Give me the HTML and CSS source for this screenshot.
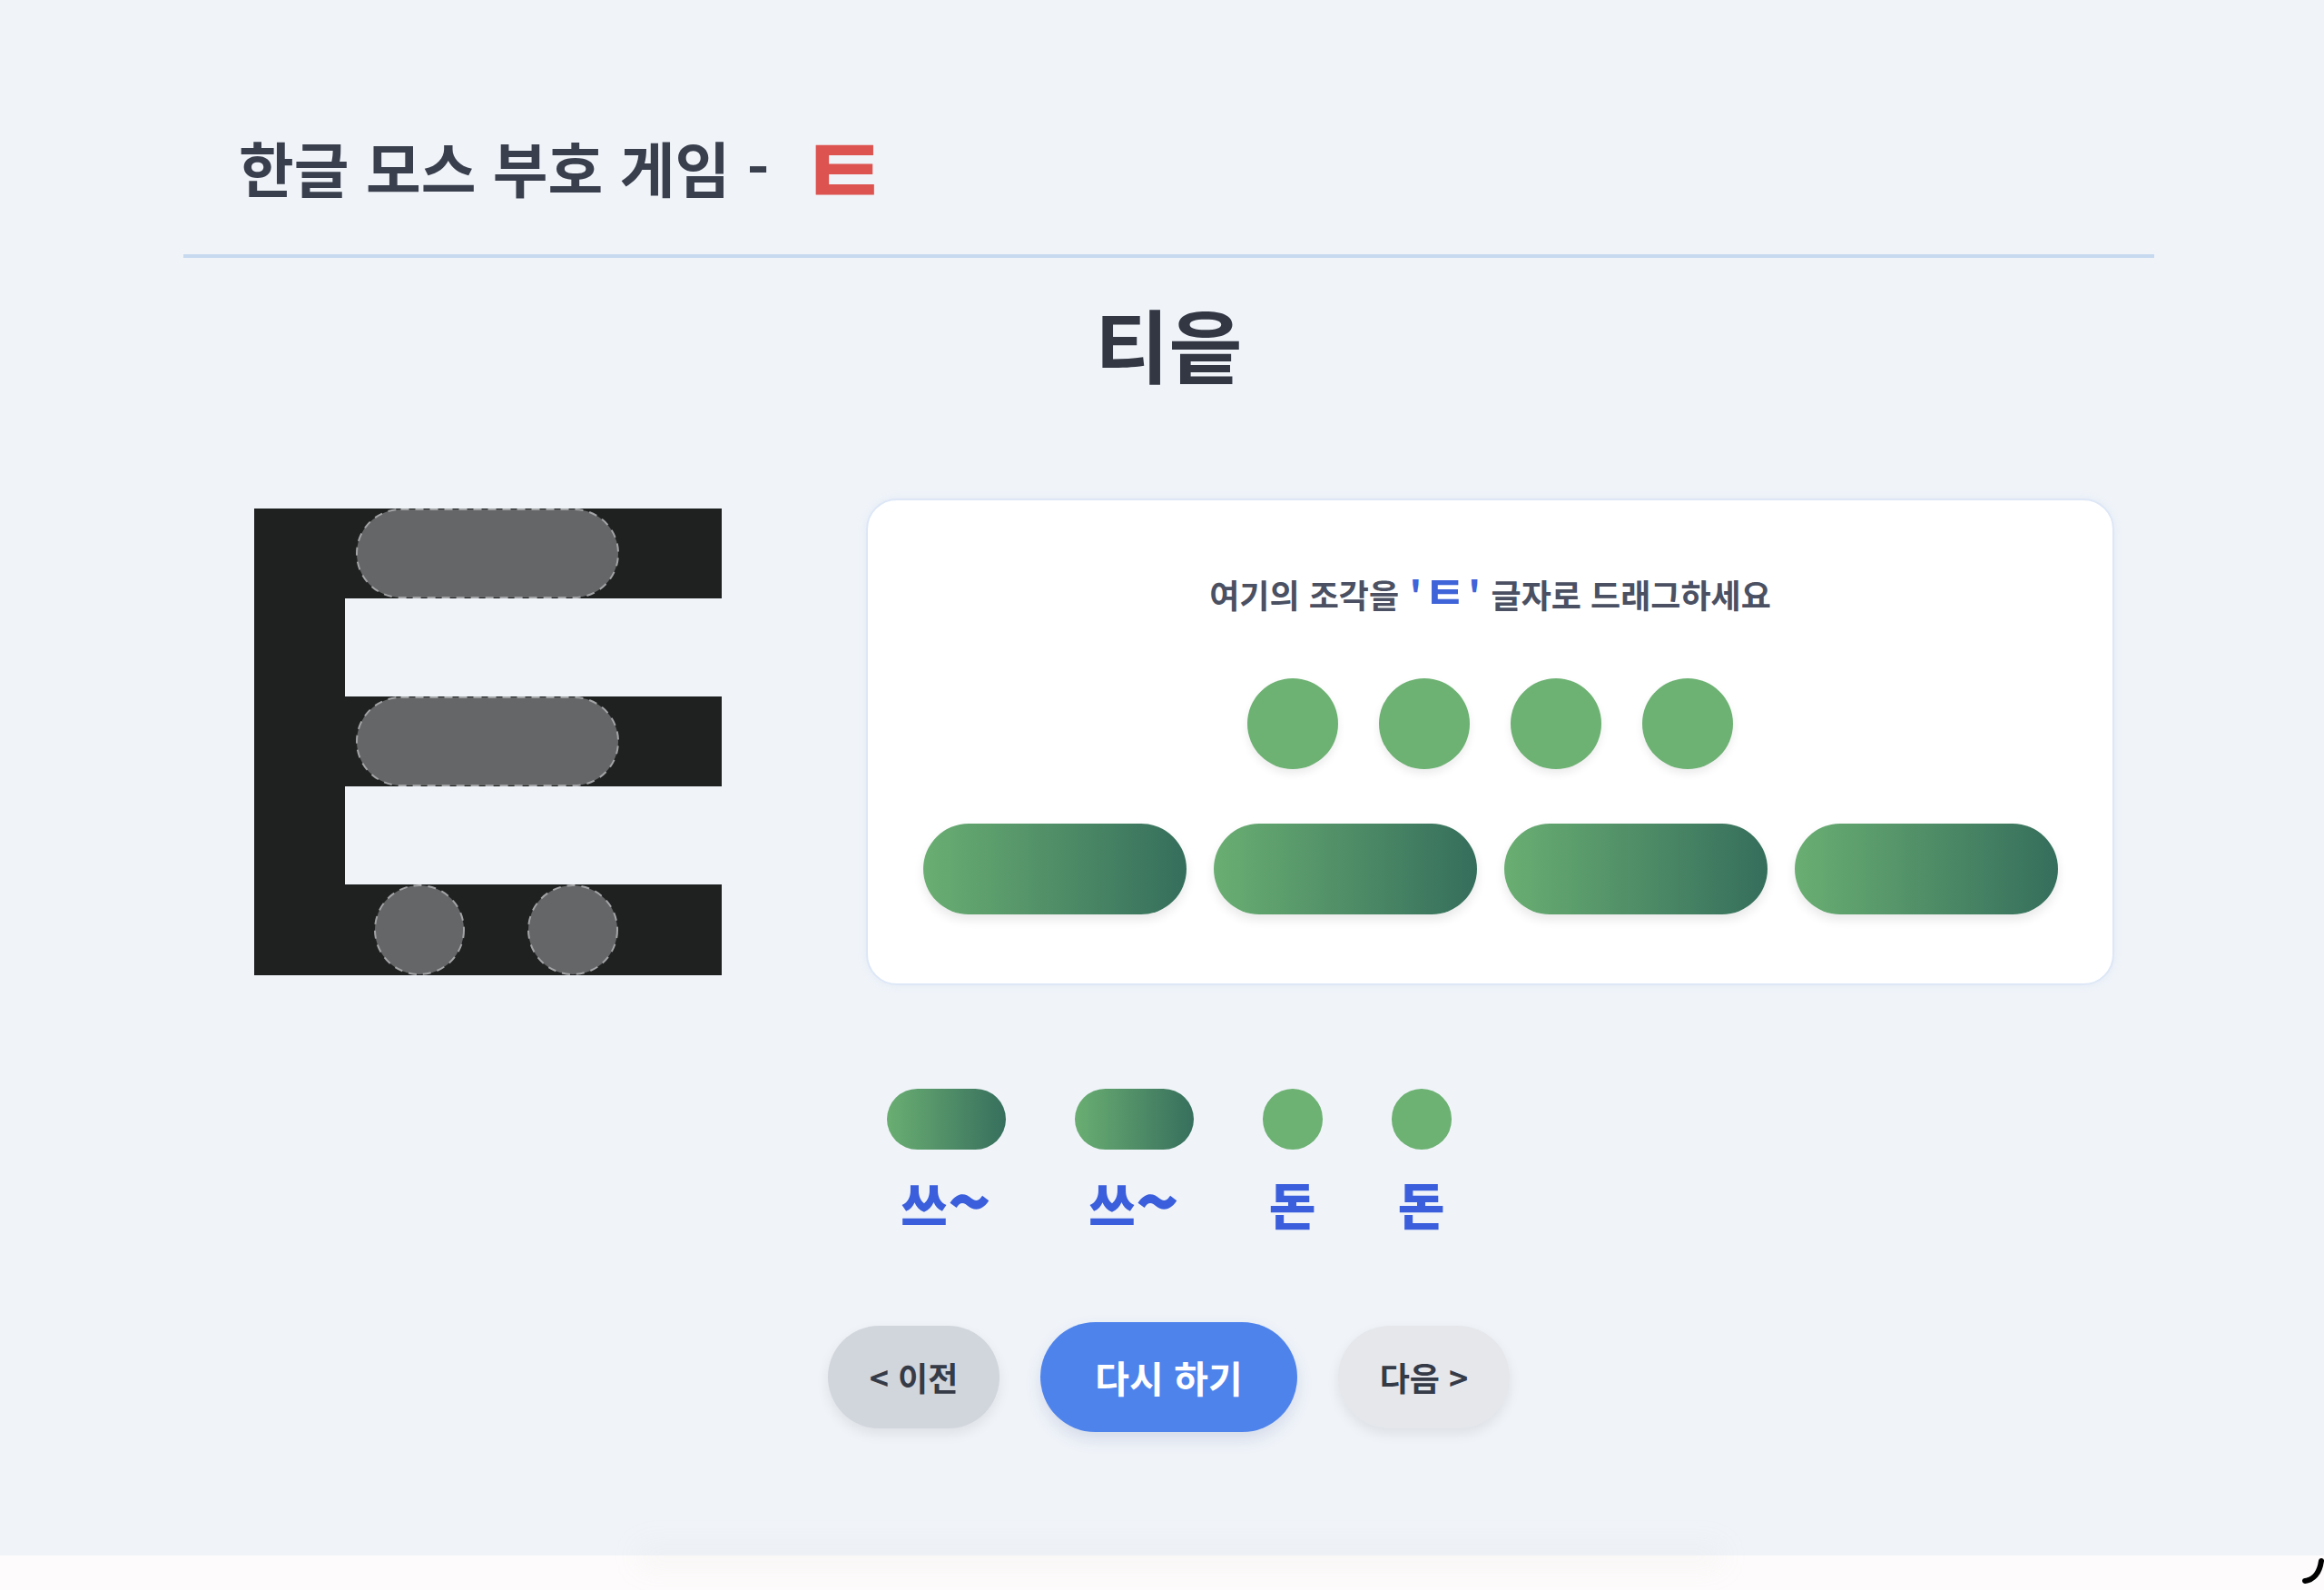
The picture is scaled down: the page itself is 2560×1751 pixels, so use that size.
FILE: index.html
```html
<!DOCTYPE html>
<html lang="ko">
<head>
<meta charset="utf-8">
<title>한글 모스 부호 게임</title>
<link rel="stylesheet" href="styles.css">
</head>
<body>
<div class="screen">
  <div class="page">
    <header class="top">
      <h1 class="title">한글 모스 부호 게임 - <span class="title-letter">ㅌ</span></h1>
    </header>

    <h2 class="name">티읕</h2>

    <section class="board">
      <!-- target letter with the drop slots laid over its strokes -->
      <svg class="glyph" width="515" height="514" viewBox="0 0 515 514">
        <g fill="#1f2121">
          <rect x="0" y="0" width="515" height="99"/>
          <rect x="0" y="0" width="100" height="514"/>
          <rect x="0" y="207" width="515" height="99"/>
          <rect x="0" y="414" width="515" height="100"/>
        </g>
        <g fill="#656667" stroke="#a3a4a6" stroke-width="2" stroke-dasharray="9 7">
          <rect x="113" y="1" width="288" height="97" rx="48.5"/>
          <rect x="113" y="208" width="288" height="97" rx="48.5"/>
          <circle cx="182" cy="464" r="49"/>
          <circle cx="351" cy="464" r="49"/>
        </g>
      </svg>

      <div class="tray">
        <p class="hint">여기의 조각을 <span class="hl">'<span class="hl-letter">ㅌ</span>'</span> 글자로 드래그하세요</p>
        <div class="dots">
          <span class="dot"></span>
          <span class="dot"></span>
          <span class="dot"></span>
          <span class="dot"></span>
        </div>
        <div class="dashes">
          <span class="dash"></span>
          <span class="dash"></span>
          <span class="dash"></span>
          <span class="dash"></span>
        </div>
      </div>
    </section>

    <div class="code">
      <div class="sym"><span class="mark mark-long"></span><span class="sound">쓰<span class="tilde">~</span></span></div>
      <div class="sym"><span class="mark mark-long"></span><span class="sound">쓰<span class="tilde">~</span></span></div>
      <div class="sym"><span class="mark mark-short"></span><span class="sound">돈</span></div>
      <div class="sym"><span class="mark mark-short"></span><span class="sound">돈</span></div>
    </div>

    <div class="actions">
      <button class="btn btn-prev" type="button">&lt; 이전</button>
      <button class="btn btn-retry" type="button">다시 하기</button>
      <button class="btn btn-next" type="button">다음 &gt;</button>
    </div>
  </div>
</div>
<div class="tail">
  <span class="tail-glow"></span>
  <svg class="tail-mark" width="24" height="30" viewBox="0 0 24 30">
    <path d="M3 26 C12 25 19 18 21 4" fill="none" stroke="#000" stroke-width="6" stroke-linecap="round"/>
  </svg>
</div>
</body>
</html>
```

FILE: styles.css
```css
* {
  box-sizing: border-box;
}

html,
body {
  margin: 0;
  padding: 0;
}

body {
  background: #fdfbfb;
  font-family: "Noto Sans CJK KR", "Noto Sans", sans-serif;
  color: #363b4a;
  overflow: hidden;
}

.screen {
  height: 1713px;
  background: #f0f4f9;
  overflow: hidden;
}

.page {
  width: 2171px;
  margin-left: 202px;
}

/* header */
.top {
  padding: 138px 0 52px 61px;
  border-bottom: 4px solid #c6d9ef;
}

.title {
  margin: 0;
  font-size: 66px;
  line-height: 90px;
  font-weight: 700;
  color: #3a3f4e;
}

.title-letter {
  display: inline-block;
  margin-left: 15px;
  font-size: 108px;
  line-height: 0;
  vertical-align: -16px;
  color: #dc5350;
  font-weight: 700;
}

.name {
  margin: 40px 0 0;
  text-align: center;
  font-size: 88px;
  line-height: 106px;
  font-weight: 700;
  color: #333744;
}

/* letter + piece tray */
.board {
  display: flex;
  align-items: center;
  gap: 159px;
  margin-top: 119px;
  padding-left: 78px;
}

.glyph {
  display: block;
  flex: none;
}

.tray {
  width: 1375px;
  padding: 76px 60px;
  background: #ffffff;
  border: 2px solid #dde7f6;
  border-radius: 34px;
  box-shadow: 0 0 10px rgba(170, 195, 235, 0.18);
}

.hint {
  margin: 0;
  text-align: center;
  font-size: 36px;
  line-height: 54px;
  font-weight: 600;
  color: #4b5162;
}

.hl {
  margin: 0 2px;
  color: #3f63d8;
  font-weight: 800;
}

.hl-letter {
  display: inline-block;
  margin: 0 3px;
  font-size: 50px;
  line-height: 0;
  vertical-align: -1px;
  font-weight: 700;
}

.dots {
  display: flex;
  justify-content: center;
  gap: 45px;
  margin-top: 66px;
}

.dot {
  width: 100px;
  height: 100px;
  border-radius: 50%;
  background: #6db173;
  box-shadow: 0 5px 10px rgba(0, 0, 0, 0.08);
}

.dashes {
  display: flex;
  justify-content: center;
  gap: 30px;
  margin-top: 60px;
}

.dash {
  width: 290px;
  height: 100px;
  border-radius: 50px;
  background: linear-gradient(90deg, #6aae72 0%, #356e5c 100%);
  box-shadow: 0 6px 12px rgba(0, 0, 0, 0.09);
}

/* morse readout */
.code {
  display: flex;
  justify-content: center;
  gap: 76px;
  margin-top: 114px;
}

.sym {
  display: flex;
  flex-direction: column;
  align-items: center;
  gap: 25px;
}

.mark {
  display: block;
  height: 67px;
  border-radius: 34px;
}

.mark-long {
  width: 131px;
  background: linear-gradient(90deg, #6aae72 0%, #376f5d 100%);
}

.mark-short {
  width: 66px;
  background: #6db173;
}

.sound {
  font-size: 56px;
  line-height: 67px;
  font-weight: 800;
  color: #3b5fdc;
}

.tilde {
  display: inline-block;
  font-size: 78px;
  line-height: 0;
  vertical-align: -4px;
}

/* buttons */
.actions {
  display: flex;
  justify-content: center;
  align-items: center;
  gap: 45px;
  margin-top: 98px;
}

.btn {
  border: 0;
  border-radius: 999px;
  font-family: inherit;
  font-weight: 700;
  cursor: pointer;
}

.btn-prev,
.btn-next {
  padding: 30px 46px;
  font-size: 36px;
  line-height: 53px;
  color: #363b48;
  box-shadow: 0 6px 14px rgba(0, 0, 0, 0.08);
}

.btn-prev {
  background: #d1d5dc;
}

.btn-next {
  background: #e5e7eb;
}

.btn-retry {
  padding: 30px 60px;
  font-size: 41px;
  line-height: 61px;
  color: #ffffff;
  background: #4f83ec;
  box-shadow: 0 8px 18px rgba(40, 70, 140, 0.14);
}

/* strip below the game area */
.tail {
  position: relative;
  height: 38px;
  background: #fdfbfb;
}

.tail-glow {
  position: absolute;
  left: 700px;
  top: -14px;
  width: 1200px;
  height: 30px;
  border-radius: 20px;
  background: rgba(210, 190, 190, 0.08);
  filter: blur(14px);
}

.tail-mark {
  position: absolute;
  right: 0;
  top: 2px;
}
```
